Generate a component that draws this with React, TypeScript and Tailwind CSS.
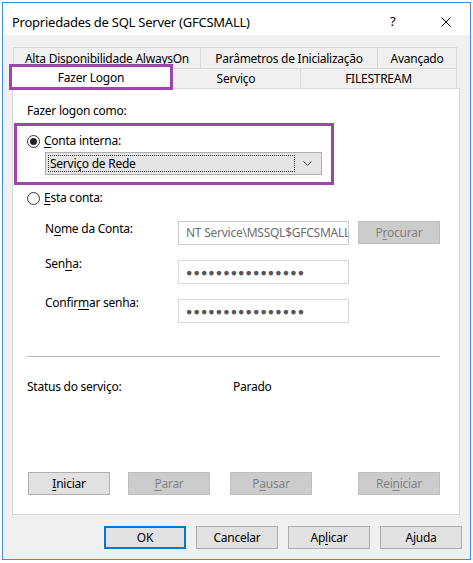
import React from "react";

const U = ({ children }: { children: React.ReactNode }) => (
  <span className="underline decoration-1 underline-offset-[2px]">{children}</span>
);

function Radio({ checked }: { checked?: boolean }) {
  return (
    <span className="w-[13px] h-[13px] rounded-full border border-[#333333] bg-white flex items-center justify-center shrink-0">
      {checked && <span className="w-[7px] h-[7px] rounded-full bg-[#222222]" />}
    </span>
  );
}

function Btn({
  children,
  disabled,
  primary,
  className = "",
}: {
  children: React.ReactNode;
  disabled?: boolean;
  primary?: boolean;
  className?: string;
}) {
  const base = "w-[82px] h-[23px] flex items-center justify-center shrink-0 leading-[16px]";
  const look = disabled
    ? "bg-[#cccccc] border border-[#bfbfbf] text-[#838383]"
    : primary
    ? "bg-[#e1e1e1] border-2 border-[#0078d7] text-black"
    : "bg-[#e1e1e1] border border-[#adadad] text-black";
  return <div className={`${base} ${look} ${className}`}>{children}</div>;
}

function Field({ children, gray }: { children: React.ReactNode; gray?: boolean }) {
  return (
    <div
      className={`w-[171px] h-[24px] bg-white border flex items-center pl-[7px] overflow-hidden whitespace-nowrap ${
        gray ? "border-[#cccccc] text-[#6d6d6d]" : "border-[#d9d9d9] text-[#505050]"
      }`}
    >
      {children}
    </div>
  );
}

const Dots = () => (
  <span className="text-[10.5px] tracking-[1.1px] text-[#555555] leading-none">
    {"\u25CF".repeat(16)}
  </span>
);

export default function App() {
  return (
    <div className="w-[473px] h-[563px] bg-white font-['Noto_Sans',sans-serif] text-[12px] tracking-[-0.25px] text-black leading-[16px] pt-[2px] pl-[2px]">
      <div className="w-[469px] h-[558px] border border-[#3b8ed8] flex flex-col relative">
        {/* title bar */}
        <div className="h-[32px] bg-white flex items-start shrink-0">
          <div className="pl-[9px] pt-[11px] text-[13px] leading-[16px] flex-1">
            Propriedades de SQL Server (GFCSMALL)
          </div>
          <div className="pt-[10px] text-[13px] leading-[16px] w-[20px] mr-[31px]">?</div>
          <svg width="10" height="10" viewBox="0 0 10 10" className="mt-[14px] mr-[19px]">
            <path d="M0.5 0.5 L9.5 9.5 M9.5 0.5 L0.5 9.5" stroke="#000" strokeWidth="1" fill="none" />
          </svg>
        </div>

        {/* body */}
        <div className="flex-1 bg-[#f0f0f0] flex flex-col relative">
          {/* tabs */}
          <div className="pt-[12px] pl-[10px] flex flex-col">
            <div className="flex h-[21px]">
              <div className="w-[187px] border-t border-l border-[#d9d9d9] flex items-center justify-center pt-[1px]">
                Alta Disponibilidade AlwaysOn
              </div>
              <div className="w-[177px] border-t border-l border-[#d9d9d9] flex items-center justify-center pt-[1px]">
                Parâmetros de Inicialização
              </div>
              <div className="w-[80px] border-t border-l border-r border-[#d9d9d9] flex items-center justify-center pt-[1px]">
                Avançado
              </div>
            </div>
            <div className="flex h-[20px] relative z-10">
              <div className="w-[162px] h-[24px] -ml-[3px] -mt-[3px] bg-white border-t border-l border-r border-[#d9d9d9] flex items-center justify-center">
                Fazer Logon
              </div>
              <div className="w-[128px] border-t border-[#d9d9d9] flex items-center justify-center">
                Serviço
              </div>
              <div className="w-[157px] border-t border-l border-r border-[#d9d9d9] flex items-center justify-center">
                FILESTREAM
              </div>
            </div>
          </div>

          {/* panel */}
          <div className="ml-[9px] w-[448px] h-[427px] bg-white border border-[#d9d9d9] flex flex-col pl-[14px] relative">
            <div className="mt-[14px]">Fazer logon como:</div>

            <div className="mt-[14px] flex items-center h-[16px]">
              <Radio checked />
              <span className="ml-[4px]">
                <U>C</U>onta interna:
              </span>
            </div>

            <div className="mt-[3px] ml-[18px] w-[277px] h-[23px] bg-[#e5e5e5] border border-[#adadad] flex items-center p-[2px]">
              <div className="flex-1 h-full border border-dotted border-[#333333] flex items-center pl-[1px]">
                Serviço de Rede
              </div>
              <div className="w-[24px] flex items-center justify-center">
                <svg width="9" height="6" viewBox="0 0 9 6">
                  <path d="M0.5 0.5 L4.5 4.5 L8.5 0.5" stroke="#444" strokeWidth="1" fill="none" />
                </svg>
              </div>
            </div>

            <div className="mt-[15px] flex items-center h-[16px]">
              <Radio />
              <span className="ml-[4px]">
                <U>E</U>sta conta:
              </span>
            </div>

            <div className="mt-[15px] flex items-start">
              <div className="ml-[18px] w-[133px] mt-[0px]">
                N<U>o</U>me da Conta:
              </div>
              <Field gray>NT Service\MSSQL$GFCSMALL</Field>
              <Btn disabled className="ml-[9px] mt-0">
                <span>
                  P<U>r</U>ocurar
                </span>
              </Btn>
            </div>

            <div className="mt-[15px] flex items-start">
              <div className="ml-[18px] w-[133px] -mt-[4px]">
                Sen<U>h</U>a:
              </div>
              <Field>
                <Dots />
              </Field>
            </div>

            <div className="mt-[15px] flex items-start">
              <div className="ml-[18px] w-[133px] -mt-[4px]">
                Confir<U>m</U>ar senha:
              </div>
              <Field>
                <Dots />
              </Field>
            </div>

            <div className="mt-[33px] w-[413px] h-px bg-[#b9b9b9]" />

            <div className="mt-[22px] flex">
              <div className="w-[206px]">Status do serviço:</div>
              <div>Parado</div>
            </div>

            <div className="mt-[77px] flex ml-[1px]">
              <Btn>
                <span>
                  <U>I</U>niciar
                </span>
              </Btn>
              <Btn disabled className="ml-[18px]">
                <span>
                  <U>P</U>arar
                </span>
              </Btn>
              <Btn disabled className="ml-[20px]">
                <span>
                  P<U>a</U>usar
                </span>
              </Btn>
              <Btn disabled className="ml-[46px]">
                <span>
                  Rei<U>n</U>iciar
                </span>
              </Btn>
            </div>

            {/* highlight box around built-in account */}
            <div className="absolute left-[1px] top-[34px] w-[320px] h-[62px] border-[3px] border-[#a044ad] pointer-events-none" />
          </div>

          {/* dialog buttons */}
          <div className="mt-[11px] flex justify-end gap-[10px] pr-[8px]">
            <Btn primary>OK</Btn>
            <Btn>Cancelar</Btn>
            <Btn>
              <span>
                Ap<U>l</U>icar
              </span>
            </Btn>
            <Btn>Ajuda</Btn>
          </div>

          {/* highlight box around selected tab */}
          <div className="absolute left-[6px] top-[29px] w-[164px] h-[26px] border-[3px] border-[#a044ad] z-20 pointer-events-none" />
        </div>
      </div>
    </div>
  );
}
